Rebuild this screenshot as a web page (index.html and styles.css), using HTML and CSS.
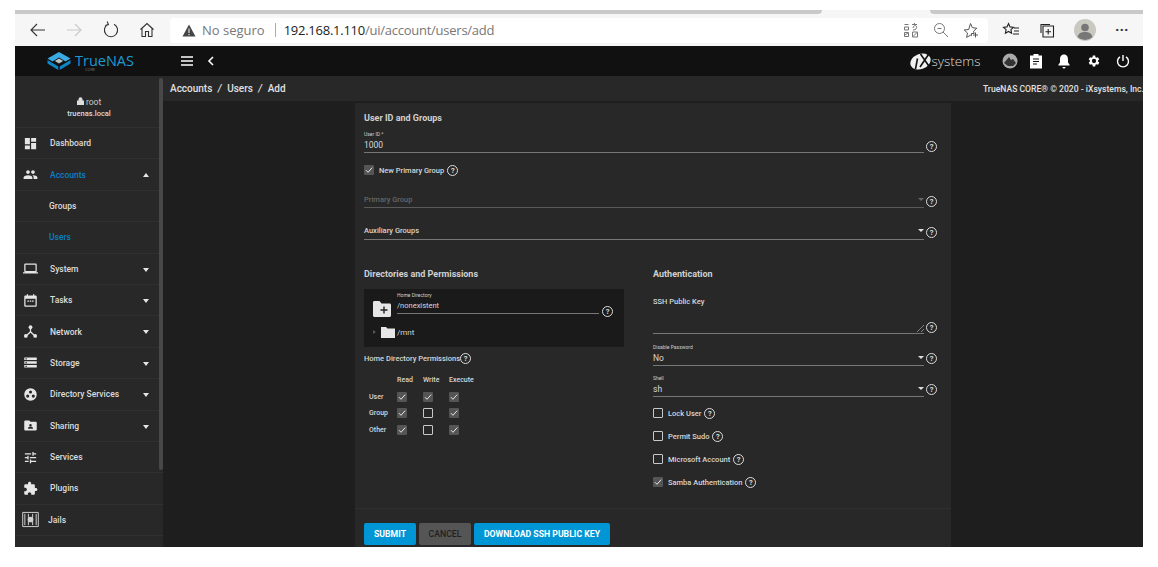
FILE: index.html
```html
<!DOCTYPE html>
<html>

<head>
    <meta charset="utf-8" />
    <title>TrueNAS - Add User</title>
    <link rel="stylesheet" href="styles.css">
</head>

<body>
    <svg class="defs" width="0" height="0">
        <symbol id="check" viewBox="0 0 10 10">
            <path d="M2 5.200l2 2.100L8.200 2.600" fill="none" stroke="#e6e6e6" stroke-width="1" />
        </symbol>
    </svg>
    <div class="frame">
        <div class="tab-strip">
            <div class="tab-line tab-line-left"></div>
            <div class="tab-gap"></div>
            <div class="tab-line tab-line-right"></div>
        </div>
        <div class="toolbar">
            <svg class="tool-icon" width="20" height="20" viewBox="0 0 20 20"><path d="M17 10H3M9 4l-6 6 6 6" fill="none" stroke="#333" stroke-width="1.100" /></svg>
            <svg class="tool-icon" width="20" height="20" viewBox="0 0 20 20"><path d="M3 10h14M11 4l6 6-6 6" fill="none" stroke="#c9c9c9" stroke-width="1.100" /></svg>
            <svg class="tool-icon tool-reload" width="20" height="20" viewBox="0 0 20 20"><path d="M7 4.200a6.600 6.600 0 1 0 6 0M6.200 1.500L7.400 4.600 4.200 5.600" fill="none" stroke="#333" stroke-width="1.100" /></svg>
            <svg class="tool-icon tool-home" width="20" height="20" viewBox="0 0 20 20"><path d="M3.500 9.500L10 3.500l6.500 6M5 8.500V16.500h3.500V11.500h3V16.500H15V8.500" fill="none" stroke="#333" stroke-width="1.100" /></svg>
            <div class="address-bar">
                <svg width="14" height="13" viewBox="0 0 14 13"><path d="M7 .5L13.500 12.500H.5z" fill="#444" /><path d="M6.500 4.500h1v4.500h-1zM6.500 10h1v1.200h-1z" fill="#fff" /></svg>
                <span class="not-secure">No seguro</span>
                <span class="url-sep"></span>
                <span class="url"><b>192.168.1.110</b>/ui/account/users/add</span>
                <span class="address-icons">
                    <svg width="16" height="16" viewBox="0 0 16 16"><path d="M1.500 2.500h4M1.500 5h4v3h-4zM9 2.500h5M11.500 1v2M10 8c3 0 4-2 3.500-3.500S10 3.500 10 6M1.500 10.500h4v4h-4zM2 13l3-2M9.500 10h5v5h-5zM10 14.500l4-4" fill="none" stroke="#777" /></svg>
                    <svg width="16" height="16" viewBox="0 0 16 16"><circle cx="6.500" cy="6.500" r="5" fill="none" stroke="#777" /><path d="M10 10l5 5M4.500 6.500h4" stroke="#777" /></svg>
                    <svg width="16" height="16" viewBox="0 0 16 16"><path d="M7.500 1.500l1.900 4.200 4.400.5-3.200 3 .5 2.300H8.500v2.200l-1-.5-3.900 2.200.9-4.400-3.300-3 4.500-.5zM10 13h5M12.500 10.500v5" fill="none" stroke="#555" /></svg>
                </span>
            </div>
            <div class="browser-actions">
                <svg width="18" height="18" viewBox="0 0 18 18"><path d="M6.500 2.500l1.500 3.400 3.500.4-2.600 2.400.7 3.500-3.100-1.800-3.100 1.800.7-3.500L1.500 6.300 5 5.900zM12 7h5M12 10h5M11 13h6" fill="none" stroke="#222" stroke-width="1.100" /></svg>
                <svg width="18" height="18" viewBox="0 0 18 18"><path d="M5 5h10.500v11H5zM10.200 8v5.500M7.500 10.700h5.500M3 12V3.500h9" fill="none" stroke="#222" stroke-width="1.100" /></svg>
                <svg class="avatar" width="22" height="22" viewBox="0 0 22 22"><circle cx="11" cy="11" r="11" fill="#c9c9c0" /><circle cx="11" cy="8.500" r="3.800" fill="#777" /><path d="M3.500 18c1-4 4-5 7.500-5s6.500 1 7.500 5a11 11 0 0 1-15 0z" fill="#777" /></svg>
                <span class="more-dots">···</span>
            </div>
        </div>

        <div class="app-bar">
            <div class="logo">
                <svg width="24" height="18" viewBox="0 0 24 18"><path d="M12 0l11.500 6.500-5 3L12 5.500 5.500 9.500l-5-3z" fill="#3aa9e4" /><path d="M12 6.500l4.200 2.500L12 11.500 7.800 9z" fill="#b9c2c8" /><path d="M.5 8l10.800 6.500V18L.5 11.500zM23.500 8L12.700 14.500V18l10.800-6.500z" fill="#0f86c6" /></svg>
                <div class="logo-text">TrueNAS<small>CORE</small></div>
            </div>
            <div class="app-bar-left">
                <svg width="14" height="12" viewBox="0 0 14 12"><path d="M1 2h12M1 6h12M1 10h12" stroke="#fff" stroke-width="1.500" /></svg>
                <svg width="8" height="10" viewBox="0 0 8 10"><path d="M6 1L2 5l4 4" fill="none" stroke="#fff" stroke-width="1.600" /></svg>
            </div>
            <div class="app-bar-right">
                <div class="ix-logo"><svg width="21" height="17" viewBox="0 0 21 17"><ellipse cx="10.500" cy="8.500" rx="10.500" ry="7.500" transform="rotate(-22 10.500 8.500)" fill="#f0f0f0" /><path d="M7.500 5.500L5.500 16M10.500 1l8 11.500M18.500 1.500L10 14" fill="none" stroke="#111" stroke-width="1.600" /></svg><span>systems</span></div>
                <svg width="16" height="16" viewBox="0 0 16 16"><circle cx="8" cy="8" r="7.500" fill="#aaa" /><path d="M2 10l5-6 2 3 2-1 3 4-3 3H6z" fill="#333" /></svg>
                <svg class="clip-icon" width="14" height="16" viewBox="0 0 14 16"><path d="M1 2.500h3.500V1h5v1.500H13V15.500H1z" fill="#fff" /><path d="M4 6h6M4 8.500h6M4 11h4" stroke="#111" stroke-width="1.200" /></svg>
                <svg width="14" height="16" viewBox="0 0 14 16"><path d="M7 1.500c3 0 4 2.500 4 5v3l1.500 2v1h-11v-1l1.500-2v-3c0-2.500 1-5 4-5zM5.500 14h3a1.500 1.500 0 0 1-3 0z" fill="#fff" /></svg>
                <svg width="16" height="16" viewBox="0 0 26 24"><path fill-rule="evenodd" d="M19.400 13a7.700 7.700 0 0 0 0-2l2.100-1.600-2-3.500-2.500 1a7.500 7.500 0 0 0-1.700-1L15 3.200h-4l-.4 2.700a7.500 7.500 0 0 0-1.700 1l-2.500-1-2 3.500L6.500 11a7.700 7.700 0 0 0 0 2l-2.100 1.600 2 3.500 2.500-1a7.500 7.500 0 0 0 1.700 1l.4 2.700h4l.4-2.700a7.500 7.500 0 0 0 1.700-1l2.500 1 2-3.500zM13 15.500a3.500 3.500 0 1 1 0-7 3.500 3.500 0 0 1 0 7z" fill="#fff" /></svg>
                <svg width="14" height="14" viewBox="0 0 14 14"><path d="M7 1v6M4 2.800a5.500 5.500 0 1 0 6 0" fill="none" stroke="#fff" stroke-width="1.400" /></svg>
            </div>
        </div>

        <div class="app-body">
            <aside class="sidebar">
                <div class="user-box">
                    <div class="user-name">
                        <svg width="7" height="8" viewBox="0 0 7 8"><path d="M1.500 3.500V2.200a2 2 0 0 1 4 0v1.300H7V8H0V3.500z" fill="#ddd" /></svg>
                        root
                    </div>
                    <div class="user-host">truenas.local</div>
                </div>
                <div class="nav-item"><svg class="nav-icon" viewBox="0 0 24 24"><path d="M3 13h8V3H3v10zm0 8h8v-6H3v6zm10 0h8V11h-8v10zm0-18v6h8V3h-8z" /></svg>Dashboard</div>
                <div class="nav-item nav-active"><svg class="nav-icon" viewBox="0 0 24 24"><path d="M16 11c1.660 0 2.990-1.340 2.990-3S17.660 5 16 5c-1.660 0-3 1.340-3 3s1.340 3 3 3zm-8 0c1.660 0 2.990-1.340 2.990-3S9.660 5 8 5C6.340 5 5 6.340 5 8s1.340 3 3 3zm0 2c-2.330 0-7 1.170-7 3.500V19h14v-2.500c0-2.330-4.670-3.500-7-3.500zm8 0c-.290 0-.620.020-.970.050 1.160.840 1.970 1.970 1.970 3.450V19h6v-2.500c0-2.330-4.670-3.500-7-3.500z" /></svg>Accounts<span class="caret caret-up"></span></div>
                <div class="nav-sub">Groups</div>
                <div class="nav-sub nav-sub-active">Users</div>
                <div class="nav-item"><svg class="nav-icon" viewBox="0 0 24 24"><path d="M20 18c1.100 0 1.990-.900 1.990-2L22 6c0-1.100-.900-2-2-2H4c-1.100 0-2 .900-2 2v10c0 1.100.900 2 2 2H0v2h24v-2h-4zM4 6h16v10H4V6z" /></svg>System<span class="caret"></span></div>
                <div class="nav-item"><svg class="nav-icon" viewBox="0 0 24 24"><path d="M20 4h-2V2h-2v2H8V2H6v2H4c-1.100 0-2 .900-2 2v14c0 1.100.900 2 2 2h16c1.100 0 2-.900 2-2V6c0-1.100-.900-2-2-2zm0 16H4V9h16v11zM7 12h2.500v2H7zm3.800 0h2.500v2h-2.500zm3.700 0H17v2h-2.500z" /></svg>Tasks<span class="caret"></span></div>
                <div class="nav-item"><svg class="nav-icon" viewBox="0 0 24 24"><circle cx="12" cy="5" r="3" /><circle cx="4.500" cy="19" r="3" /><circle cx="19.500" cy="19" r="3" /><path d="M11 6h2v6l6.500 6-1.400 1.400L12 14l-6.100 5.400L4.500 18 11 12z" /></svg>Network<span class="caret"></span></div>
                <div class="nav-item"><svg class="nav-icon" viewBox="0 0 24 24"><path d="M2 20h20v-4H2v4zm2-3h2v2H4v-2zM2 4v4h20V4H2zm4 3H4V5h2v2zm-4 7h20v-4H2v4zm2-3h2v2H4v-2z" /></svg>Storage<span class="caret"></span></div>
                <div class="nav-item"><svg class="nav-icon" viewBox="0 0 24 24"><path fill-rule="evenodd" d="M12 2a10 10 0 1 0 0 20 10 10 0 0 0 0-20zm0 3.500a2.500 2.500 0 1 1 0 5 2.500 2.500 0 0 1 0-5zM7.500 12a2.500 2.500 0 1 1 0 5 2.500 2.500 0 0 1 0-5zm9 0a2.500 2.500 0 1 1 0 5 2.500 2.500 0 0 1 0-5z" /></svg>Directory Services<span class="caret"></span></div>
                <div class="nav-item"><svg class="nav-icon" viewBox="0 0 24 24"><path fill-rule="evenodd" d="M20 6h-8l-2-2H4c-1.100 0-1.990.900-1.990 2L2 18c0 1.100.900 2 2 2h16c1.100 0 2-.900 2-2V8c0-1.100-.900-2-2-2zm-8 3.500a2 2 0 1 1 0 4 2 2 0 0 1 0-4zM16 17H8v-1c0-1.330 2.670-2 4-2s4 .670 4 2v1z" /></svg>Sharing<span class="caret"></span></div>
                <div class="nav-item"><svg class="nav-icon" viewBox="0 0 24 24"><path d="M3 17v2h6v-2H3zM3 5v2h10V5H3zm10 16v-2h8v-2h-8v-2h-2v6h2zM7 9v2H3v2h4v2h2V9H7zm14 4v-2H11v2h10zm-6-4h2V7h4V5h-4V3h-2v6z" /></svg>Services</div>
                <div class="nav-item"><svg class="nav-icon" viewBox="0 0 24 24"><path d="M20.500 11H19V7c0-1.100-.900-2-2-2h-4V3.500C13 2.120 11.880 1 10.500 1S8 2.120 8 3.500V5H4c-1.100 0-1.990.900-1.990 2v3.800H3.500c1.490 0 2.700 1.210 2.700 2.700s-1.210 2.700-2.700 2.700H2V20c0 1.100.900 2 2 2h3.800v-1.500c0-1.490 1.210-2.700 2.700-2.700 1.490 0 2.700 1.210 2.700 2.700V22H17c1.100 0 2-.900 2-2v-4h1.500c1.380 0 2.500-1.120 2.500-2.500S21.880 11 20.500 11z" /></svg>Plugins</div>
                <div class="nav-item nav-jails"><svg class="nav-icon jail-icon" viewBox="0 0 24 24"><path d="M1 2h22v20H1zM4 4v16M9 4v16M15 4v16M20 4v16" fill="none" stroke="#cfcfcf" stroke-width="1.400" /><circle cx="12" cy="12" r="4" fill="#cfcfcf" /></svg>Jails</div>
                <div class="sidebar-scroll"></div>
            </aside>

            <main class="main">
                <div class="crumb-bar">
                    <div class="crumbs">Accounts <i>/</i> Users <i>/</i> Add</div>
                    <div class="copyright">TrueNAS CORE® © 2020 - iXsystems, Inc.</div>
                </div>
                <div class="content">
                    <form class="card">
                        <h4 class="section-title section-first">User ID and Groups</h4>
                        <div class="field-row">
                            <div class="field-main">
                                <div class="small-label">User ID *</div>
                                <div class="field-value">1000</div>
                            </div>
                            <span class="help">?</span>
                        </div>
                        <div class="check-row check-primary"><span class="box box-on"><svg><use href="#check" /></svg></span>New Primary Group<span class="help">?</span></div>
                        <div class="field-row select-primary">
                            <div class="field-main field-disabled">Primary Group<span class="caret caret-small"></span></div>
                            <span class="help">?</span>
                        </div>
                        <div class="field-row select-aux">
                            <div class="field-main field-bold">Auxiliary Groups<span class="caret caret-small caret-light"></span></div>
                            <span class="help">?</span>
                        </div>

                        <div class="columns">
                            <div class="col-left">
                                <h4 class="section-title">Directories and Permissions</h4>
                                <div class="tree-box">
                                    <div class="tree-top">
                                        <svg width="20" height="18" viewBox="0 0 20 18"><path d="M1 2.500C1 1.500 1.700 1 2.500 1h5l2 2.500h8c1 0 1.500.700 1.500 1.500v10.500c0 .800-.700 1.500-1.500 1.500h-15C1.700 17 1 16.300 1 15.500z" fill="#e6e6e6" /><path d="M12 6.500v7M8.500 10h7" stroke="#222" stroke-width="1.400" /></svg>
                                        <div class="tree-field">
                                            <div class="small-label">Home Directory</div>
                                            <div class="field-value">/nonexistent</div>
                                        </div>
                                        <span class="help">?</span>
                                    </div>
                                    <div class="tree-node">
                                        <span class="tree-arrow"></span>
                                        <svg width="14" height="12" viewBox="0 0 14 12"><path d="M0 1h5l1.500 1.500H14V12H0z" fill="#e6e6e6" /></svg>
                                        <span>/mnt</span>
                                    </div>
                                </div>
                                <div class="perm-title">Home Directory Permissions<span class="help">?</span></div>
                                <div class="perm-grid">
                                    <span></span><b>Read</b><b>Write</b><b>Execute</b>
                                    <em>User</em><span class="box box-on"><svg><use href="#check" /></svg></span><span class="box box-on"><svg><use href="#check" /></svg></span><span class="box box-on"><svg><use href="#check" /></svg></span>
                                    <em>Group</em><span class="box box-on"><svg><use href="#check" /></svg></span><span class="box"></span><span class="box box-on"><svg><use href="#check" /></svg></span>
                                    <em>Other</em><span class="box box-on"><svg><use href="#check" /></svg></span><span class="box"></span><span class="box box-on"><svg><use href="#check" /></svg></span>
                                </div>
                            </div>
                            <div class="col-right">
                                <h4 class="section-title">Authentication</h4>
                                <div class="field-row ssh-row">
                                    <div class="field-main ssh-main">
                                        <div class="field-bold">SSH Public Key</div>
                                        <svg class="resize-mark" width="7" height="7" viewBox="0 0 7 7"><path d="M0 7l7-7M4 7l3-3" stroke="#999" stroke-width=".8" /></svg>
                                    </div>
                                    <span class="help">?</span>
                                </div>
                                <div class="field-row select-auth">
                                    <div class="field-main">
                                        <div class="small-label">Disable Password</div>
                                        <div class="field-value">No<span class="caret caret-small caret-light"></span></div>
                                    </div>
                                    <span class="help">?</span>
                                </div>
                                <div class="field-row select-auth select-shell">
                                    <div class="field-main">
                                        <div class="small-label">Shell</div>
                                        <div class="field-value">sh<span class="caret caret-small caret-light"></span></div>
                                    </div>
                                    <span class="help">?</span>
                                </div>
                                <div class="check-row auth-check auth-check-first"><span class="box"></span>Lock User<span class="help">?</span></div>
                                <div class="check-row auth-check"><span class="box"></span>Permit Sudo<span class="help">?</span></div>
                                <div class="check-row auth-check"><span class="box"></span>Microsoft Account<span class="help">?</span></div>
                                <div class="check-row auth-check"><span class="box box-on"><svg><use href="#check" /></svg></span>Samba Authentication<span class="help">?</span></div>
                            </div>
                        </div>

                        <div class="buttons">
                            <button type="button" class="btn btn-blue btn-submit">SUBMIT</button>
                            <button type="button" class="btn btn-cancel">CANCEL</button>
                            <button type="button" class="btn btn-blue btn-download">DOWNLOAD SSH PUBLIC KEY</button>
                        </div>
                    </form>
                </div>
            </main>
        </div>
    </div>
</body>

</html>
```

FILE: styles.css
```css
* {
    box-sizing: border-box;
}

body {
    margin: 0;
    background-color: #fff;
    font-family: Roboto, "Liberation Sans", sans-serif;
    overflow: hidden;
}

.defs {
    display: block;
}

.frame {
    width: 1128px;
    height: 537px;
    margin: 10px 15px 0;
    overflow: hidden;
    display: flex;
    flex-direction: column;
}

/* browser chrome */
.tab-strip {
    height: 4px;
    display: flex;
    background-color: #f6f6f6;
}

.tab-line {
    background-color: #c9c9c9;
}

.tab-line-left {
    width: 807px;
    border-bottom-right-radius: 4px;
}

.tab-gap {
    width: 108px;
}

.tab-line-right {
    flex: 1;
    border-bottom-left-radius: 4px;
}

.toolbar {
    height: 32px;
    flex: none;
    background-color: #f6f6f6;
    display: flex;
    align-items: center;
    padding-left: 13px;
}

.tool-icon {
    flex: none;
    margin-right: 16px;
}

.tool-reload {
    margin-left: 1px;
}

.tool-home {
    margin-right: 13px;
}

.address-bar {
    width: 818px;
    flex: none;
    height: 25px;
    background-color: #fff;
    border-radius: 4px;
    display: flex;
    align-items: center;
    padding-left: 12px;
    font-family: "Open Sans", sans-serif;
    font-size: 13px;
    color: #777;
}

.not-secure {
    margin-left: 6px;
}

.url-sep {
    width: 1px;
    height: 14px;
    background-color: #aaa;
    margin: 0 8px 0 10px;
}

.url {
    letter-spacing: -.25px;
}

.url b {
    font-weight: 400;
    color: #222;
}

.address-icons {
    margin-left: auto;
    margin-right: 9px;
    display: flex;
    gap: 14px;
}

.browser-actions {
    flex: 1;
    display: flex;
    align-items: center;
    padding-left: 14px;
    gap: 18px;
}

.avatar {
    flex: none;
}

.more-dots {
    color: #333;
    font-size: 15px;
    font-weight: 700;
    margin-left: 1px;
}

/* app header */
.app-bar {
    height: 30px;
    background-color: #111;
    display: flex;
    align-items: center;
    flex: none;
}

.logo {
    width: 148px;
    display: flex;
    align-items: center;
    padding-left: 32px;
    gap: 4px;
}

.logo-text {
    position: relative;
    color: #1c9ad6;
    font-family: "Open Sans", sans-serif;
    font-size: 14.500px;
    line-height: 14px;
}

.logo-text small {
    position: absolute;
    left: 10px;
    top: 14px;
    color: #777;
    font-size: 4px;
    line-height: 4px;
}

.app-bar-left {
    display: flex;
    align-items: center;
    gap: 13px;
    padding-left: 17px;
}

.app-bar-right {
    margin-left: auto;
    display: flex;
    align-items: center;
    gap: 14.500px;
    padding-right: 13px;
}

.clip-icon {
    margin-left: -3.500px;
}

.ix-logo {
    display: flex;
    align-items: center;
    margin-right: 6.500px;
    color: #ddd;
    font-family: "Open Sans", sans-serif;
    font-size: 13.500px;
    font-weight: 300;
    gap: 1px;
}

/* sidebar */
.app-body {
    flex: 1;
    display: flex;
    min-height: 0;
}

.sidebar {
    position: relative;
    width: 148px;
    flex: none;
    background-color: #282828;
    color: #dcdcdc;
    font-size: 8.500px;
}

.sidebar-scroll {
    position: absolute;
    top: 2px;
    right: 0;
    width: 4px;
    height: 392px;
    background-color: #484848;
    border-radius: 2px;
}

.user-box {
    height: 52px;
    padding-top: 21px;
    text-align: center;
    border-bottom: 1px solid #303030;
}

.user-name {
    font-size: 8.500px;
    line-height: 11px;
    color: #c8c8c8;
}

.user-host {
    font-size: 7.500px;
    line-height: 11px;
    font-weight: 500;
}

.nav-item,
.nav-sub {
    height: 31.400px;
    display: flex;
    align-items: center;
    border-bottom: 1px solid #303030;
    font-weight: 500;
    position: relative;
}

.nav-icon {
    width: 15px;
    height: 15px;
    margin: 0 12px 0 8px;
    fill: #e6e6e6;
    flex: none;
}

.jail-icon {
    width: 17px;
    height: 17px;
    margin: 0 9px 0 7px;
}

.nav-active {
    color: #0a7fc4;
}

.nav-sub {
    padding-left: 34px;
}

.nav-sub-active {
    color: #0a7fc4;
}

.caret {
    position: absolute;
    right: 14px;
    top: 14px;
    border-left: 3.500px solid transparent;
    border-right: 3.500px solid transparent;
    border-top: 4px solid #e6e6e6;
}

.caret-up {
    border-top: none;
    border-bottom: 4px solid #e6e6e6;
}

.caret-small {
    right: 0;
    top: 5px;
    border-top: 3px solid #666;
}

.caret-light {
    border-top-color: #ddd;
}

/* main */
.main {
    flex: 1;
    min-width: 0;
    background-color: #1e1e1e;
    display: flex;
    flex-direction: column;
}

.crumb-bar {
    height: 25px;
    flex: none;
    background-color: #282828;
    display: flex;
    align-items: center;
    justify-content: space-between;
    padding-left: 7px;
    color: #e0e0e0;
}

.crumbs {
    font-size: 10px;
    font-weight: 500;
}

.crumbs i {
    margin: 0 3px;
}

.copyright {
    font-size: 8.600px;
    font-weight: 500;
    white-space: nowrap;
    margin-right: -1px;
}

.content {
    flex: 1;
    padding: 2px 0 0 192px;
    min-height: 0;
}

.card {
    width: 596px;
    height: 444px;
    background-color: #282828;
    padding: 0 14px 0 9px;
    color: #d6d6d6;
    font-size: 8px;
    position: relative;
}

.section-title {
    margin: 0;
    font-size: 9px;
    line-height: 14px;
    font-weight: 700;
    color: #d0d0d0;
}

.section-first {
    padding-top: 8px;
    height: 27px;
}

.field-row {
    display: flex;
    align-items: flex-end;
}

.field-main {
    flex: 1;
    min-width: 0;
    position: relative;
    border-bottom: 1px solid #777;
}

.small-label {
    font-size: 5px;
    line-height: 8px;
    color: #cfcfcf;
}

.field-value {
    font-size: 8.500px;
    line-height: 14px;
    position: relative;
    color: #d8d8d8;
}

.help {
    flex: none;
    width: 11px;
    height: 11px;
    margin-left: 2px;
    margin-bottom: 1px;
    border: 1px solid #ddd;
    border-radius: 50%;
    color: #ddd;
    font-size: 7.500px;
    line-height: 9px;
    text-align: center;
    font-weight: 700;
}

.box {
    flex: none;
    display: block;
    width: 10px;
    height: 10px;
    border: 1px solid #c8c8c8;
    border-radius: 1px;
}

.box-on {
    background-color: #555;
    border: none;
}

.box svg {
    display: block;
    width: 10px;
    height: 10px;
}

.check-row {
    display: flex;
    align-items: center;
    height: 14px;
    font-weight: 500;
    font-size: 7.500px;
}

.check-row .box {
    margin-right: 5px;
}

.check-row .help {
    margin: 0 0 0 3px;
}

.check-primary {
    margin-top: 10px;
}

.field-disabled,
.field-bold {
    line-height: 14px;
    font-size: 7.500px;
    font-weight: 500;
}

.field-disabled {
    color: #666;
    border-bottom-color: #5a5a5a;
}

.select-primary {
    margin-top: 16px;
}

.select-aux {
    margin-top: 16px;
}

.select-aux .help {
    margin-bottom: 2px;
}

.select-aux .field-main {
    padding-bottom: 1px;
}

.columns {
    display: flex;
    gap: 29px;
    margin-top: 27px;
}

.col-left {
    width: 260px;
    flex: none;
}

.col-right {
    flex: 1;
    min-width: 0;
}

.tree-box {
    height: 58px;
    margin-top: 8px;
    background-color: #1a1a1a;
    padding: 2px 11px 0 8px;
}

.tree-top {
    display: flex;
    align-items: flex-start;
    height: 26px;
}

.tree-top svg {
    flex: none;
    margin: 9px 5px 0 0;
}

.tree-field {
    flex: 1;
    border-bottom: 1px solid #777;
}

.tree-field .field-value {
    font-size: 7.500px;
    line-height: 13px;
    padding-bottom: 1px;
}

.tree-top .help {
    margin: 15px 0 0 3px;
}

.tree-node {
    display: flex;
    align-items: center;
    margin-top: 9px;
    padding-left: 1px;
    gap: 2px;
    font-size: 8px;
}

.tree-arrow {
    border-left: 3px solid #555;
    border-top: 2.500px solid transparent;
    border-bottom: 2.500px solid transparent;
    margin-right: 3px;
}

.perm-title {
    display: flex;
    align-items: center;
    height: 12px;
    margin-top: 5px;
    font-size: 7.500px;
    font-weight: 500;
}

.perm-title .help {
    margin: 0;
}

.perm-grid {
    display: grid;
    grid-template-columns: 33px 26px 26px 40px;
    grid-auto-rows: 16.500px;
    align-items: center;
    margin-top: 8px;
    font-size: 7px;
}

.perm-grid b {
    font-weight: 500;
}

.perm-grid em {
    font-style: normal;
    font-weight: 500;
    padding-left: 5px;
}

.ssh-row {
    margin-top: 15px;
}

.ssh-row .help {
    margin-bottom: 1px;
}

.ssh-main {
    height: 38px;
}

.resize-mark {
    position: absolute;
    right: 0;
    bottom: 1px;
}

.ssh-main .field-bold {
    line-height: 12px;
}

.select-auth {
    margin-top: 9px;
}

.select-shell {
    margin-top: 8px;
}

.select-auth .help {
    margin-bottom: 2px;
}

.auth-check {
    margin-bottom: 9px;
}

.auth-check-first {
    margin-top: 9px;
}

.buttons {
    position: absolute;
    left: 0;
    right: 0;
    top: 405px;
    padding: 14px 0 0 9px;
    border-top: 1px solid #303030;
    display: flex;
    gap: 3px;
}

.btn {
    height: 22px;
    border: none;
    border-radius: 2px;
    font-family: inherit;
    font-size: 8.700px;
    font-weight: 700;
    padding: 0;
}

.btn-blue {
    background-color: #0095d5;
    color: #fff;
}

.btn-submit {
    width: 52px;
}

.btn-cancel {
    width: 52px;
    background-color: #555;
    color: #222;
    font-weight: 500;
}

.btn-download {
    width: 136px;
}
```
